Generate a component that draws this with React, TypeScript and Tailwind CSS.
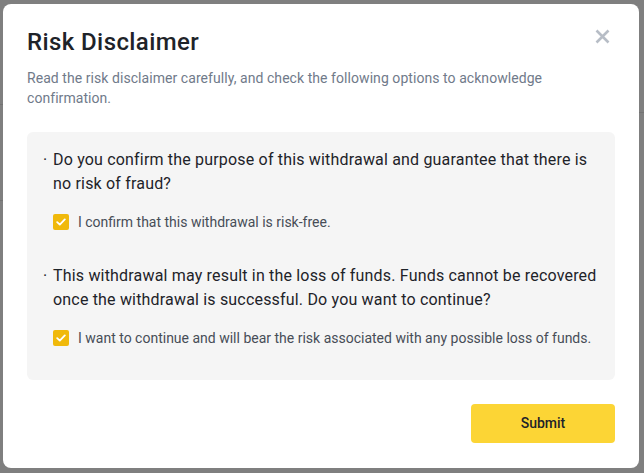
import React, { useState } from 'react';

const questions = [
  {
    lines: ['Do you confirm the purpose of this withdrawal and guarantee that there is', 'no risk of fraud?'],
    label: 'I confirm that this withdrawal is risk-free.',
  },
  {
    lines: ['This withdrawal may result in the loss of funds. Funds cannot be recovered', 'once the withdrawal is successful. Do you want to continue?'],
    label: 'I want to continue and will bear the risk associated with any possible loss of funds.',
  },
];

const CheckBox: React.FC<{ checked: boolean; onToggle: () => void }> = ({ checked, onToggle }) => (
  <button
    type="button"
    onClick={onToggle}
    className={`w-4 h-4 rounded-[2px] flex items-center justify-center shrink-0 ${
      checked ? 'bg-[#F0B90B]' : 'border border-[#B7BDC6] bg-white'
    }`}
  >
    {checked && (
      <svg width="10" height="8" viewBox="0 0 10 8" fill="none">
        <path d="M1.2 4.2L3.8 6.6L8.8 1.4" stroke="white" strokeWidth="1.8" strokeLinecap="round" strokeLinejoin="round" />
      </svg>
    )}
  </button>
);

export default function App() {
  const [checked, setChecked] = useState([true, true]);

  return (
    <div
      className="relative w-[644px] h-[473px] bg-[#7f7f7f] overflow-hidden"
      style={{ fontFamily: 'Roboto, "Noto Sans", Arial, sans-serif' }}
    >
      {/* faint page behind the overlay */}
      <div className="absolute left-0 top-[104px] w-[3px] h-px bg-[#737373]" />
      <div className="absolute left-0 top-[200px] w-[3px] h-px bg-[#737373]" />
      <div className="absolute left-[637px] top-[112px] w-[7px] h-px bg-[#737373]" />

      <div className="absolute left-[3px] top-[4px] w-[636px] h-[464px] bg-white rounded-lg px-6 pt-6 flex flex-col">
        <div className="flex items-start justify-between">
          <h2 className="text-[24px] leading-[28px] font-medium tracking-[0.4px] text-[#1E2329]">Risk Disclaimer</h2>
          <button type="button" className="mt-[1px] mr-[5px]">
            <svg width="15" height="15" viewBox="0 0 15 15" fill="none">
              <path d="M1.5 1.5L13.5 13.5M13.5 1.5L1.5 13.5" stroke="#B7BDC6" strokeWidth="2.6" />
            </svg>
          </button>
        </div>
        <p className="mt-3 text-[14px] leading-5 tracking-[0.06px] text-[#707A8A]">
          Read the risk disclaimer carefully, and check the following options to acknowledge
          <br />
          confirmation.
        </p>

        <div className="mt-6 bg-[#F5F5F5] rounded-md px-4 pt-4">
          {questions.map((q, i) => (
            <div key={i} className="mb-8 flex">
              <span className="w-[10px] shrink-0 text-[16px] leading-6 text-[#1E2329]">·</span>
              <div className="flex flex-col">
                <p className="text-[16px] leading-6 tracking-[0.18px] text-[#1E2329] whitespace-nowrap">
                  {q.lines[0]}
                  <br />
                  {q.lines[1]}
                </p>
                <label className="mt-4 flex items-center gap-[9px] text-[14px] leading-5 text-[#474D57] whitespace-nowrap">
                  <CheckBox
                    checked={checked[i]}
                    onToggle={() => setChecked((c) => c.map((v, j) => (j === i ? !v : v)))}
                  />
                  {q.label}
                </label>
              </div>
            </div>
          ))}
        </div>

        <div className="mt-6 flex justify-end">
          <button
            type="button"
            className="w-[144px] h-[39px] rounded bg-[#FCD535] text-[14px] font-medium text-[#1E2329]"
          >
            Submit
          </button>
        </div>
      </div>
    </div>
  );
}
